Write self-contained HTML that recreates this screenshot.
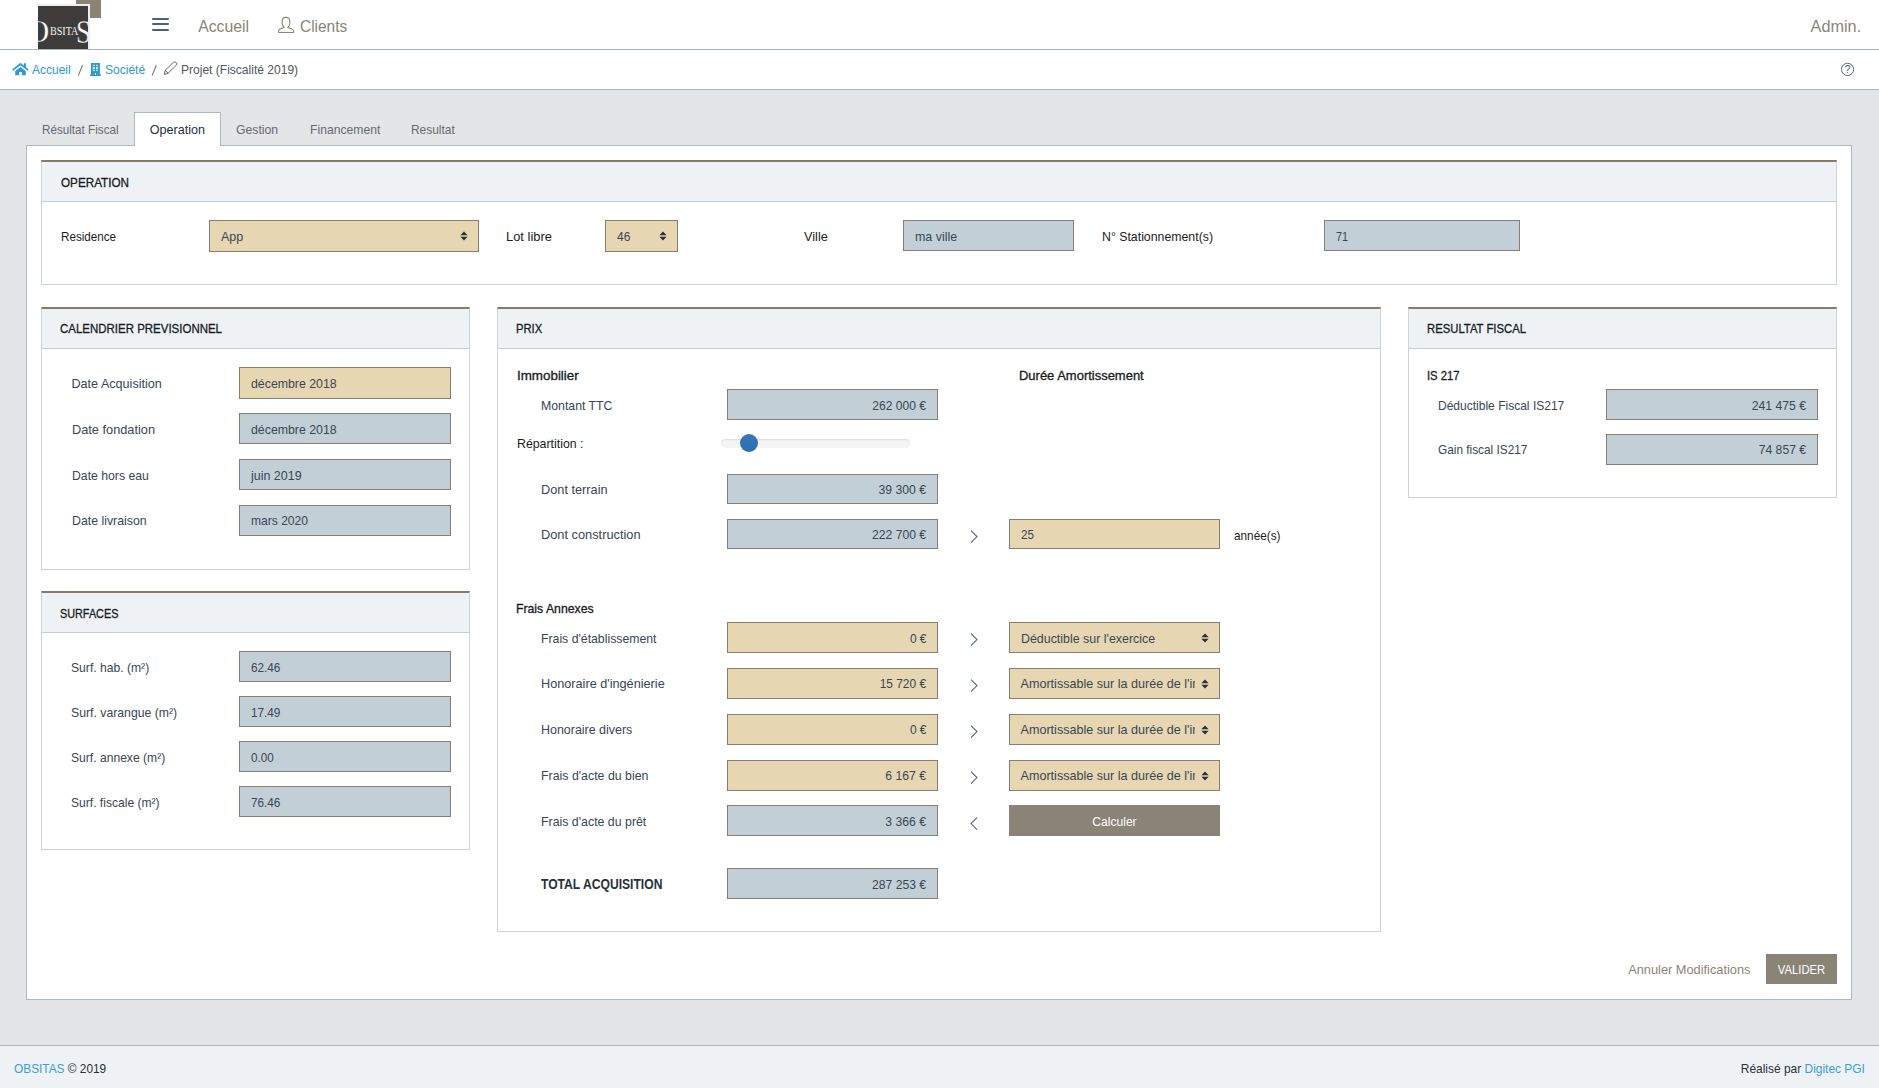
<!DOCTYPE html>
<html><head><meta charset="utf-8"><title>Projet (Fiscalité 2019)</title>
<style>
html,body{margin:0;padding:0;}
body{width:1879px;height:1088px;position:relative;overflow:hidden;background:#e4e5e7;font-family:"Liberation Sans",sans-serif;}
.a{position:absolute;white-space:nowrap;}
</style></head><body>
<div class="a" style="left:0px;top:0px;width:1879px;height:50px;background:#fff;border-bottom:1px solid #a3b4be;box-sizing:border-box;"></div>
<div class="a" style="left:76px;top:0px;width:25px;height:18px;background:#8a8476;"></div>
<div class="a" style="left:38px;top:4px;width:52px;height:45px;background:#eceef0;"></div>
<div class="a" style="left:38px;top:6px;width:50px;height:43px;background:#3d3c3b;"></div>
<div class="a" style="left:38px;top:5px;width:50px;height:44px;overflow:hidden"><div class="a" style="left:-12px;top:10px;font-family:'Liberation Serif',serif;font-size:32.5px;line-height:32.5px;color:#fff;-webkit-text-stroke:0.4px #3d3c3b">O</div><div class="a" style="left:11.5px;top:19px;font-family:'Liberation Serif',serif;font-size:13.3px;line-height:13.3px;color:#f4f4f4;transform:scaleX(0.76);transform-origin:0 0">BSITA</div><div class="a" style="left:38px;top:9px;font-family:'Liberation Serif',serif;font-size:34.4px;line-height:34.4px;color:#fff;-webkit-text-stroke:0.4px #3d3c3b;transform:scaleX(0.78);transform-origin:0 0">S</div></div>
<div class="a" style="left:152.2px;top:17.95px;width:16.80000000000001px;height:1.7000000000000028px;background:#4d6271;border-radius:1px;"></div>
<div class="a" style="left:152.2px;top:23.349999999999998px;width:16.80000000000001px;height:1.7000000000000028px;background:#4d6271;border-radius:1px;"></div>
<div class="a" style="left:152.2px;top:28.95px;width:16.80000000000001px;height:1.7000000000000028px;background:#4d6271;border-radius:1px;"></div>
<div class="a" style="top:18.00px;font-size:15.8px;line-height:18.17px;color:#8a8577;left:198.2px;">Accueil</div>
<svg class="a" style="left:277px;top:16px" width="18" height="18" viewBox="0 0 18 18"><path d="M9 1.4 C6.6 1.4 5.2 2.9 5.2 5.2 L5.2 7.8 C5.2 9.2 6 10.3 7 11 L7.2 11.5 C5.2 12.1 3.6 12.6 2.4 13.3 C1.8 13.7 1.6 14.3 1.6 15 L1.6 16.5 L16.6 16.5 L16.6 15 C16.6 14.3 16.2 13.8 15.6 13.4 C14.4 12.6 12.8 12.1 10.8 11.5 L11 11 C12 10.3 12.8 9.2 12.8 7.8 L12.8 5.2 C12.8 2.9 11.4 1.4 9 1.4 Z" fill="none" stroke="#8a8577" stroke-width="1.1" stroke-linejoin="round"/></svg>
<div class="a" style="top:18.00px;font-size:15.8px;line-height:18.17px;color:#8a8577;left:299.8px;transform:scaleX(0.9773);transform-origin:0 0;">Clients</div>
<div class="a" style="top:18.00px;font-size:15.8px;line-height:18.17px;color:#8a8577;right:17.40000000000009px;transform:scaleX(1.0290);transform-origin:100% 0;">Admin.</div>
<div class="a" style="left:0px;top:50px;width:1879px;height:40px;background:#fff;border-bottom:1px solid #a3b4be;box-sizing:border-box;"></div>
<svg class="a" style="left:10px;top:60px" width="22" height="18" viewBox="0 0 22 18"><polyline points="3.3,9.6 10.4,4.0 17.6,9.6" fill="none" stroke="#2b9ad4" stroke-width="1.8" stroke-linecap="round" stroke-linejoin="round"/><rect x="13.9" y="3.3" width="2" height="4" fill="#2b9ad4"/><path d="M5.2 10.9 L10.4 6.9 L15.8 10.9 V15.3 H11.9 V12 H9 V15.3 H5.2 Z" fill="#2b9ad4"/></svg>
<div class="a" style="top:63.00px;font-size:12.6px;line-height:14.49px;color:#2b9ad4;left:31.5px;transform:scaleX(0.9530);transform-origin:0 0;">Accueil</div>
<svg class="a" style="left:76px;top:63px" width="9" height="15" viewBox="0 0 9 15"><line x1="6.5" y1="2.3" x2="2.3" y2="12.6" stroke="#6a7178" stroke-width="1.05"/></svg>
<svg class="a" style="left:86px;top:60px" width="18" height="18" viewBox="0 0 18 18"><path d="M5 3.1 H13.9 V14.5 H14.9 V15.9 H4 V14.5 H5 Z" fill="#2b9ad4"/><g fill="#dff0f8"><rect x="6.9" y="4.8" width="1.9" height="1.1"/><rect x="10" y="4.8" width="1.9" height="1.1"/><rect x="6.9" y="6.9" width="1.9" height="2.3"/><rect x="10" y="6.9" width="1.9" height="2.3"/><rect x="6.9" y="9.9" width="1.9" height="1.1"/><rect x="10" y="9.9" width="1.9" height="1.1"/></g><ellipse cx="9.45" cy="13.9" rx="0.6" ry="1.0" fill="#fff"/></svg>
<div class="a" style="top:63.00px;font-size:12.6px;line-height:14.49px;color:#2b9ad4;left:104.7px;transform:scaleX(0.9544);transform-origin:0 0;">Société</div>
<svg class="a" style="left:150px;top:63px" width="9" height="15" viewBox="0 0 9 15"><line x1="6.3" y1="2.3" x2="2.1" y2="12.6" stroke="#6a7178" stroke-width="1.05"/></svg>
<svg class="a" style="left:160px;top:60px" width="20" height="18" viewBox="0 0 20 18"><path d="M4.4 14.5 L5.1 10.4 L13.4 2.3 Q15.3 1.2 16.6 2.9 Q17.4 4.3 16.5 5 L8.2 13.1 Z M5.1 10.4 L8.2 13.1" fill="none" stroke="#5d6166" stroke-width="0.95" stroke-linejoin="round"/></svg>
<div class="a" style="top:63.00px;font-size:12.6px;line-height:14.49px;color:#50575e;left:180.9px;transform:scaleX(0.9559);transform-origin:0 0;">Projet (Fiscalité 2019)</div>
<svg class="a" style="left:1840px;top:62px" width="15" height="15" viewBox="0 0 15 15"><circle cx="7.6" cy="7.4" r="6.1" fill="none" stroke="#44505c" stroke-width="0.85"/><text x="7.6" y="10.7" text-anchor="middle" font-family="Liberation Sans" font-size="10" fill="#44505c">?</text></svg>
<div class="a" style="left:134px;top:112px;width:87px;height:34px;background:#fff;border:1px solid #a9bac4;border-bottom:none;box-sizing:border-box;"></div>
<div class="a" style="top:123.00px;font-size:12.6px;line-height:14.49px;color:#646b72;left:41.7px;transform:scaleX(0.9274);transform-origin:0 0;">Résultat Fiscal</div>
<div class="a" style="top:123.00px;font-size:12.6px;line-height:14.49px;color:#27303a;left:149.7px;">Operation</div>
<div class="a" style="top:123.00px;font-size:12.6px;line-height:14.49px;color:#646b72;left:236.2px;transform:scaleX(0.9699);transform-origin:0 0;">Gestion</div>
<div class="a" style="top:123.00px;font-size:12.6px;line-height:14.49px;color:#646b72;left:309.6px;transform:scaleX(0.9655);transform-origin:0 0;">Financement</div>
<div class="a" style="top:123.00px;font-size:12.6px;line-height:14.49px;color:#646b72;left:411.2px;transform:scaleX(0.9480);transform-origin:0 0;">Resultat</div>
<div class="a" style="left:26px;top:145px;width:1826px;height:855px;background:#fff;border:1px solid #a9bac4;box-sizing:border-box;"></div>
<div class="a" style="left:135px;top:145px;width:85px;height:2px;background:#fff;"></div>
<div class="a" style="left:41px;top:160px;width:1796px;height:125px;background:#fff;border:1px solid #c9d4db;border-top:2px solid #857b6a;box-sizing:border-box;"></div>
<div class="a" style="left:42px;top:162px;width:1794px;height:40px;background:#eef2f5;border-bottom:1px solid #c3cfd8;box-sizing:border-box;"></div>
<div class="a" style="top:176.00px;font-size:12.6px;line-height:14.49px;color:#161c22;left:60.5px;transform:scaleX(0.9283);transform-origin:0 0;-webkit-text-stroke:0.3px #161c22;">OPERATION</div>
<div class="a" style="top:230.00px;font-size:12.6px;line-height:14.49px;color:#1b1d20;left:60.9px;transform:scaleX(0.9241);transform-origin:0 0;">Residence</div>
<div class="a" style="left:209px;top:220px;width:270px;height:32px;background:#e6d6b2;border:1px solid #877e6f;box-sizing:border-box;"></div>
<div class="a" style="top:230.00px;font-size:12.6px;line-height:14.49px;color:#3a4653;left:220.8px;transform:scaleX(0.9901);transform-origin:0 0;">App</div>
<svg class="a" style="left:459.5px;top:231.0px" width="8" height="10" viewBox="0 0 8 10"><path d="M0.4 4.3 L4 0.6 L7.6 4.3 Z M0.4 5.7 L4 9.4 L7.6 5.7 Z" fill="#26313b"/></svg>
<div class="a" style="top:230.00px;font-size:12.6px;line-height:14.49px;color:#1b1d20;left:506.2px;transform:scaleX(1.0243);transform-origin:0 0;">Lot libre</div>
<div class="a" style="left:605px;top:220px;width:73px;height:32px;background:#e6d6b2;border:1px solid #877e6f;box-sizing:border-box;"></div>
<div class="a" style="top:230.00px;font-size:12.6px;line-height:14.49px;color:#3a4653;left:616.8px;transform:scaleX(0.9561);transform-origin:0 0;">46</div>
<svg class="a" style="left:658.5px;top:231.0px" width="8" height="10" viewBox="0 0 8 10"><path d="M0.4 4.3 L4 0.6 L7.6 4.3 Z M0.4 5.7 L4 9.4 L7.6 5.7 Z" fill="#26313b"/></svg>
<div class="a" style="top:230.00px;font-size:12.6px;line-height:14.49px;color:#1b1d20;left:803.6px;transform:scaleX(1.0094);transform-origin:0 0;">Ville</div>
<div class="a" style="left:903px;top:220px;width:171px;height:31px;background:#c3cfd7;border:1px solid #877e6f;box-sizing:border-box;"></div>
<div class="a" style="top:230.00px;font-size:12.6px;line-height:14.49px;color:#3a4653;left:914.8px;transform:scaleX(0.9882);transform-origin:0 0;">ma ville</div>
<div class="a" style="top:230.00px;font-size:12.6px;line-height:14.49px;color:#1b1d20;left:1101.7px;transform:scaleX(0.9777);transform-origin:0 0;">N° Stationnement(s)</div>
<div class="a" style="left:1324px;top:220px;width:196px;height:31px;background:#c3cfd7;border:1px solid #877e6f;box-sizing:border-box;"></div>
<div class="a" style="top:230.00px;font-size:12.6px;line-height:14.49px;color:#3a4653;left:1335.8px;transform:scaleX(0.8562);transform-origin:0 0;">71</div>
<div class="a" style="left:41px;top:307px;width:429px;height:263px;background:#fff;border:1px solid #c9d4db;border-top:2px solid #857b6a;box-sizing:border-box;"></div>
<div class="a" style="left:42px;top:309px;width:427px;height:40px;background:#eef2f5;border-bottom:1px solid #c3cfd8;box-sizing:border-box;"></div>
<div class="a" style="top:322.00px;font-size:12.6px;line-height:14.49px;color:#161c22;left:60.4px;transform:scaleX(0.9113);transform-origin:0 0;-webkit-text-stroke:0.3px #161c22;">CALENDRIER PREVISIONNEL</div>
<div class="a" style="top:377.00px;font-size:12.6px;line-height:14.49px;color:#384653;left:71.5px;">Date Acquisition</div>
<div class="a" style="left:239px;top:367px;width:212px;height:32px;background:#e6d6b2;border:1px solid #877e6f;box-sizing:border-box;"></div>
<div class="a" style="top:377.00px;font-size:12.6px;line-height:14.49px;color:#3a4653;left:250.8px;transform:scaleX(0.9791);transform-origin:0 0;">décembre 2018</div>
<div class="a" style="top:423.00px;font-size:12.6px;line-height:14.49px;color:#384653;left:71.5px;transform:scaleX(1.0132);transform-origin:0 0;">Date fondation</div>
<div class="a" style="left:239px;top:413px;width:212px;height:31px;background:#c3cfd7;border:1px solid #877e6f;box-sizing:border-box;"></div>
<div class="a" style="top:423.00px;font-size:12.6px;line-height:14.49px;color:#3a4653;left:250.8px;transform:scaleX(0.9791);transform-origin:0 0;">décembre 2018</div>
<div class="a" style="top:469.00px;font-size:12.6px;line-height:14.49px;color:#384653;left:71.5px;transform:scaleX(0.9706);transform-origin:0 0;">Date hors eau</div>
<div class="a" style="left:239px;top:459px;width:212px;height:31px;background:#c3cfd7;border:1px solid #877e6f;box-sizing:border-box;"></div>
<div class="a" style="top:469.00px;font-size:12.6px;line-height:14.49px;color:#3a4653;left:250.8px;transform:scaleX(0.9897);transform-origin:0 0;">juin 2019</div>
<div class="a" style="top:514.00px;font-size:12.6px;line-height:14.49px;color:#384653;left:71.5px;transform:scaleX(0.9791);transform-origin:0 0;">Date livraison</div>
<div class="a" style="left:239px;top:505px;width:212px;height:31px;background:#c3cfd7;border:1px solid #877e6f;box-sizing:border-box;"></div>
<div class="a" style="top:514.00px;font-size:12.6px;line-height:14.49px;color:#3a4653;left:250.8px;transform:scaleX(0.9577);transform-origin:0 0;">mars 2020</div>
<div class="a" style="left:41px;top:591px;width:429px;height:259px;background:#fff;border:1px solid #c9d4db;border-top:2px solid #857b6a;box-sizing:border-box;"></div>
<div class="a" style="left:42px;top:593px;width:427px;height:40px;background:#eef2f5;border-bottom:1px solid #c3cfd8;box-sizing:border-box;"></div>
<div class="a" style="top:607.00px;font-size:12.6px;line-height:14.49px;color:#161c22;left:60.4px;transform:scaleX(0.8602);transform-origin:0 0;-webkit-text-stroke:0.3px #161c22;">SURFACES</div>
<div class="a" style="top:661.00px;font-size:12.6px;line-height:14.49px;color:#384653;left:71.2px;transform:scaleX(0.9632);transform-origin:0 0;">Surf. hab. (m²)</div>
<div class="a" style="left:239px;top:651px;width:212px;height:31px;background:#c3cfd7;border:1px solid #877e6f;box-sizing:border-box;"></div>
<div class="a" style="top:661.00px;font-size:12.6px;line-height:14.49px;color:#3a4653;left:250.8px;transform:scaleX(0.9329);transform-origin:0 0;">62.46</div>
<div class="a" style="top:706.00px;font-size:12.6px;line-height:14.49px;color:#384653;left:71.2px;transform:scaleX(0.9726);transform-origin:0 0;">Surf. varangue (m²)</div>
<div class="a" style="left:239px;top:696px;width:212px;height:31px;background:#c3cfd7;border:1px solid #877e6f;box-sizing:border-box;"></div>
<div class="a" style="top:706.00px;font-size:12.6px;line-height:14.49px;color:#3a4653;left:250.8px;transform:scaleX(0.9329);transform-origin:0 0;">17.49</div>
<div class="a" style="top:751.00px;font-size:12.6px;line-height:14.49px;color:#384653;left:71.2px;transform:scaleX(0.9614);transform-origin:0 0;">Surf. annexe (m²)</div>
<div class="a" style="left:239px;top:741px;width:212px;height:31px;background:#c3cfd7;border:1px solid #877e6f;box-sizing:border-box;"></div>
<div class="a" style="top:751.00px;font-size:12.6px;line-height:14.49px;color:#3a4653;left:250.8px;transform:scaleX(0.9259);transform-origin:0 0;">0.00</div>
<div class="a" style="top:796.00px;font-size:12.6px;line-height:14.49px;color:#384653;left:71.2px;transform:scaleX(0.9591);transform-origin:0 0;">Surf. fiscale (m²)</div>
<div class="a" style="left:239px;top:786px;width:212px;height:31px;background:#c3cfd7;border:1px solid #877e6f;box-sizing:border-box;"></div>
<div class="a" style="top:796.00px;font-size:12.6px;line-height:14.49px;color:#3a4653;left:250.8px;transform:scaleX(0.9329);transform-origin:0 0;">76.46</div>
<div class="a" style="left:497px;top:307px;width:884px;height:625px;background:#fff;border:1px solid #c9d4db;border-top:2px solid #857b6a;box-sizing:border-box;"></div>
<div class="a" style="left:498px;top:309px;width:882px;height:40px;background:#eef2f5;border-bottom:1px solid #c3cfd8;box-sizing:border-box;"></div>
<div class="a" style="top:322.00px;font-size:12.6px;line-height:14.49px;color:#161c22;left:516.3px;transform:scaleX(0.8910);transform-origin:0 0;-webkit-text-stroke:0.3px #161c22;">PRIX</div>
<div class="a" style="top:369.00px;font-size:12.6px;line-height:14.49px;color:#161c22;left:516.5px;transform:scaleX(1.0621);transform-origin:0 0;-webkit-text-stroke:0.3px #161c22;">Immobilier</div>
<div class="a" style="top:369.00px;font-size:12.6px;line-height:14.49px;color:#161c22;left:1019px;transform:scaleX(1.0298);transform-origin:0 0;-webkit-text-stroke:0.3px #161c22;">Durée Amortissement</div>
<div class="a" style="top:399.00px;font-size:12.6px;line-height:14.49px;color:#384653;left:540.8px;transform:scaleX(0.9759);transform-origin:0 0;">Montant TTC</div>
<div class="a" style="left:727px;top:389px;width:211px;height:31px;background:#c3cfd7;border:1px solid #877e6f;box-sizing:border-box;"></div>
<div class="a" style="top:399.00px;font-size:12.6px;line-height:14.49px;color:#3a4653;right:952.5px;transform:scaleX(0.9602);transform-origin:100% 0;">262 000 €</div>
<div class="a" style="top:437.00px;font-size:12.6px;line-height:14.49px;color:#1b1d20;left:516.5px;transform:scaleX(0.9793);transform-origin:0 0;">Répartition :</div>
<div class="a" style="left:721px;top:439px;width:189px;height:9px;background:#f5f5f5;border-radius:4.5px;box-shadow:inset 0 1px 1.5px rgba(0,0,0,0.10);"></div>
<div class="a" style="left:739.8px;top:433.8px;width:18.0px;height:18.0px;background:#3074b4;border-radius:50%;background-image:linear-gradient(#3379b9,#2d6eae);"></div>
<div class="a" style="top:483.00px;font-size:12.6px;line-height:14.49px;color:#384653;left:540.6px;transform:scaleX(1.0120);transform-origin:0 0;">Dont terrain</div>
<div class="a" style="left:727px;top:474px;width:211px;height:30px;background:#c3cfd7;border:1px solid #877e6f;box-sizing:border-box;"></div>
<div class="a" style="top:483.00px;font-size:12.6px;line-height:14.49px;color:#3a4653;right:952.5px;transform:scaleX(0.9688);transform-origin:100% 0;">39 300 €</div>
<div class="a" style="top:528.00px;font-size:12.6px;line-height:14.49px;color:#384653;left:540.6px;transform:scaleX(1.0162);transform-origin:0 0;">Dont construction</div>
<div class="a" style="left:727px;top:519px;width:211px;height:30px;background:#c3cfd7;border:1px solid #877e6f;box-sizing:border-box;"></div>
<div class="a" style="top:528.00px;font-size:12.6px;line-height:14.49px;color:#3a4653;right:952.5px;transform:scaleX(0.9637);transform-origin:100% 0;">222 700 €</div>
<svg class="a" style="left:969.5px;top:529.9px" width="8" height="13.2" viewBox="0 0 8 13.2"><path d="M1 0.6 L7 6.6 L1 12.6" fill="none" stroke="#4a6282" stroke-width="1.05"/></svg>
<div class="a" style="left:1009px;top:519px;width:211px;height:30px;background:#e6d6b2;border:1px solid #877e6f;box-sizing:border-box;"></div>
<div class="a" style="top:528.00px;font-size:12.6px;line-height:14.49px;color:#3a4653;left:1020.8px;transform:scaleX(0.9275);transform-origin:0 0;">25</div>
<div class="a" style="top:529.00px;font-size:12.6px;line-height:14.49px;color:#1b1d20;left:1233.8px;transform:scaleX(0.9353);transform-origin:0 0;">année(s)</div>
<div class="a" style="top:602.00px;font-size:12.6px;line-height:14.49px;color:#161c22;left:516px;transform:scaleX(0.9723);transform-origin:0 0;-webkit-text-stroke:0.3px #161c22;">Frais Annexes</div>
<div class="a" style="top:632.00px;font-size:12.6px;line-height:14.49px;color:#384653;left:540.6px;transform:scaleX(0.9738);transform-origin:0 0;">Frais d'établissement</div>
<div class="a" style="left:727px;top:622px;width:211px;height:31px;background:#e6d6b2;border:1px solid #877e6f;box-sizing:border-box;"></div>
<div class="a" style="top:632.00px;font-size:12.6px;line-height:14.49px;color:#3a4653;right:952.5px;transform:scaleX(0.9477);transform-origin:100% 0;">0 €</div>
<svg class="a" style="left:969.5px;top:632.6999999999999px" width="8" height="13.2" viewBox="0 0 8 13.2"><path d="M1 0.6 L7 6.6 L1 12.6" fill="none" stroke="#4a6282" stroke-width="1.05"/></svg>
<div class="a" style="left:1009px;top:622px;width:211px;height:31px;background:#e6d6b2;border:1px solid #877e6f;box-sizing:border-box;"></div>
<div class="a" style="left:1010px;top:623px;width:185px;height:29px;overflow:hidden"><div class="a" style="top:9.00px;font-size:12.6px;line-height:14.49px;color:#3a4653;left:10.5px;transform:scaleX(0.9852);transform-origin:0 0;">Déductible sur l'exercice</div>
</div>
<svg class="a" style="left:1200.5px;top:632.5px" width="8" height="10" viewBox="0 0 8 10"><path d="M0.4 4.3 L4 0.6 L7.6 4.3 Z M0.4 5.7 L4 9.4 L7.6 5.7 Z" fill="#26313b"/></svg>
<div class="a" style="top:677.00px;font-size:12.6px;line-height:14.49px;color:#384653;left:540.6px;transform:scaleX(1.0071);transform-origin:0 0;">Honoraire d'ingénierie</div>
<div class="a" style="left:727px;top:668px;width:211px;height:31px;background:#e6d6b2;border:1px solid #877e6f;box-sizing:border-box;"></div>
<div class="a" style="top:677.00px;font-size:12.6px;line-height:14.49px;color:#3a4653;right:952.5px;transform:scaleX(0.9463);transform-origin:100% 0;">15 720 €</div>
<svg class="a" style="left:969.5px;top:678.6999999999999px" width="8" height="13.2" viewBox="0 0 8 13.2"><path d="M1 0.6 L7 6.6 L1 12.6" fill="none" stroke="#4a6282" stroke-width="1.05"/></svg>
<div class="a" style="left:1009px;top:668px;width:211px;height:31px;background:#e6d6b2;border:1px solid #877e6f;box-sizing:border-box;"></div>
<div class="a" style="left:1010px;top:669px;width:185px;height:29px;overflow:hidden"><div class="a" style="top:8.00px;font-size:12.6px;line-height:14.49px;color:#3a4653;left:10.5px;">Amortissable sur la durée de l'immobilisation</div>
</div>
<svg class="a" style="left:1200.5px;top:678.5px" width="8" height="10" viewBox="0 0 8 10"><path d="M0.4 4.3 L4 0.6 L7.6 4.3 Z M0.4 5.7 L4 9.4 L7.6 5.7 Z" fill="#26313b"/></svg>
<div class="a" style="top:723.00px;font-size:12.6px;line-height:14.49px;color:#384653;left:540.6px;transform:scaleX(0.9880);transform-origin:0 0;">Honoraire divers</div>
<div class="a" style="left:727px;top:714px;width:211px;height:31px;background:#e6d6b2;border:1px solid #877e6f;box-sizing:border-box;"></div>
<div class="a" style="top:723.00px;font-size:12.6px;line-height:14.49px;color:#3a4653;right:952.5px;transform:scaleX(0.9477);transform-origin:100% 0;">0 €</div>
<svg class="a" style="left:969.5px;top:724.6999999999999px" width="8" height="13.2" viewBox="0 0 8 13.2"><path d="M1 0.6 L7 6.6 L1 12.6" fill="none" stroke="#4a6282" stroke-width="1.05"/></svg>
<div class="a" style="left:1009px;top:714px;width:211px;height:31px;background:#e6d6b2;border:1px solid #877e6f;box-sizing:border-box;"></div>
<div class="a" style="left:1010px;top:715px;width:185px;height:29px;overflow:hidden"><div class="a" style="top:8.00px;font-size:12.6px;line-height:14.49px;color:#3a4653;left:10.5px;">Amortissable sur la durée de l'immobilisation</div>
</div>
<svg class="a" style="left:1200.5px;top:724.5px" width="8" height="10" viewBox="0 0 8 10"><path d="M0.4 4.3 L4 0.6 L7.6 4.3 Z M0.4 5.7 L4 9.4 L7.6 5.7 Z" fill="#26313b"/></svg>
<div class="a" style="top:769.00px;font-size:12.6px;line-height:14.49px;color:#384653;left:540.6px;transform:scaleX(0.9807);transform-origin:0 0;">Frais d'acte du bien</div>
<div class="a" style="left:727px;top:760px;width:211px;height:31px;background:#e6d6b2;border:1px solid #877e6f;box-sizing:border-box;"></div>
<div class="a" style="top:769.00px;font-size:12.6px;line-height:14.49px;color:#3a4653;right:952.5px;transform:scaleX(0.9683);transform-origin:100% 0;">6 167 €</div>
<svg class="a" style="left:969.5px;top:770.6999999999999px" width="8" height="13.2" viewBox="0 0 8 13.2"><path d="M1 0.6 L7 6.6 L1 12.6" fill="none" stroke="#4a6282" stroke-width="1.05"/></svg>
<div class="a" style="left:1009px;top:760px;width:211px;height:31px;background:#e6d6b2;border:1px solid #877e6f;box-sizing:border-box;"></div>
<div class="a" style="left:1010px;top:761px;width:185px;height:29px;overflow:hidden"><div class="a" style="top:8.00px;font-size:12.6px;line-height:14.49px;color:#3a4653;left:10.5px;">Amortissable sur la durée de l'immobilisation</div>
</div>
<svg class="a" style="left:1200.5px;top:770.5px" width="8" height="10" viewBox="0 0 8 10"><path d="M0.4 4.3 L4 0.6 L7.6 4.3 Z M0.4 5.7 L4 9.4 L7.6 5.7 Z" fill="#26313b"/></svg>
<div class="a" style="top:815.00px;font-size:12.6px;line-height:14.49px;color:#384653;left:540.6px;transform:scaleX(0.9804);transform-origin:0 0;">Frais d'acte du prêt</div>
<div class="a" style="left:727px;top:805px;width:211px;height:31px;background:#c3cfd7;border:1px solid #877e6f;box-sizing:border-box;"></div>
<div class="a" style="top:815.00px;font-size:12.6px;line-height:14.49px;color:#3a4653;right:952.5px;transform:scaleX(0.9683);transform-origin:100% 0;">3 366 €</div>
<svg class="a" style="left:969.5px;top:816.8px" width="8" height="13.2" viewBox="0 0 8 13.2"><path d="M7 0.6 L1 6.6 L7 12.6" fill="none" stroke="#4a6282" stroke-width="1.05"/></svg>
<div class="a" style="left:1009px;top:805px;width:211px;height:31px;background:#8a8476;"></div>
<div class="a" style="top:815.00px;font-size:12.6px;line-height:14.49px;color:#fff;left:1009.0px;width:211px;text-align:center;transform:scaleX(0.9588);transform-origin:50% 0;">Calculer</div>
<div class="a" style="top:876.00px;font-size:14px;line-height:16.1px;color:#27313a;font-weight:700;left:540.5px;transform:scaleX(0.8655);transform-origin:0 0;">TOTAL ACQUISITION</div>
<div class="a" style="left:727px;top:868px;width:211px;height:31px;background:#c3cfd7;border:1px solid #877e6f;box-sizing:border-box;"></div>
<div class="a" style="top:878.00px;font-size:12.6px;line-height:14.49px;color:#3a4653;right:952.5px;transform:scaleX(0.9637);transform-origin:100% 0;">287 253 €</div>
<div class="a" style="left:1408px;top:307px;width:429px;height:191px;background:#fff;border:1px solid #c9d4db;border-top:2px solid #857b6a;box-sizing:border-box;"></div>
<div class="a" style="left:1409px;top:309px;width:427px;height:40px;background:#eef2f5;border-bottom:1px solid #c3cfd8;box-sizing:border-box;"></div>
<div class="a" style="top:322.00px;font-size:12.6px;line-height:14.49px;color:#161c22;left:1427px;transform:scaleX(0.8972);transform-origin:0 0;-webkit-text-stroke:0.3px #161c22;">RESULTAT FISCAL</div>
<div class="a" style="top:369.00px;font-size:12.6px;line-height:14.49px;color:#161c22;left:1427px;transform:scaleX(0.8923);transform-origin:0 0;-webkit-text-stroke:0.3px #161c22;">IS 217</div>
<div class="a" style="top:399.00px;font-size:12.6px;line-height:14.49px;color:#384653;left:1438.4px;transform:scaleX(0.9546);transform-origin:0 0;">Déductible Fiscal IS217</div>
<div class="a" style="left:1606px;top:389px;width:212px;height:31px;background:#c3cfd7;border:1px solid #877e6f;box-sizing:border-box;"></div>
<div class="a" style="top:399.00px;font-size:12.6px;line-height:14.49px;color:#3a4653;right:72.5px;transform:scaleX(0.9709);transform-origin:100% 0;">241 475 €</div>
<div class="a" style="top:443.00px;font-size:12.6px;line-height:14.49px;color:#384653;left:1438.4px;transform:scaleX(0.9389);transform-origin:0 0;">Gain fiscal IS217</div>
<div class="a" style="left:1606px;top:434px;width:212px;height:31px;background:#c3cfd7;border:1px solid #877e6f;box-sizing:border-box;"></div>
<div class="a" style="top:443.00px;font-size:12.6px;line-height:14.49px;color:#3a4653;right:72.5px;transform:scaleX(0.9647);transform-origin:100% 0;">74 857 €</div>
<div class="a" style="top:963.00px;font-size:12.6px;line-height:14.49px;color:#8a8577;right:128.20000000000005px;transform:scaleX(1.0149);transform-origin:100% 0;">Annuler Modifications</div>
<div class="a" style="left:1766px;top:954px;width:71px;height:30px;background:#8a8476;"></div>
<div class="a" style="top:963.00px;font-size:12.6px;line-height:14.49px;color:#fff;left:1766.0px;width:71px;text-align:center;transform:scaleX(0.8949);transform-origin:50% 0;">VALIDER</div>
<div class="a" style="left:0px;top:1045px;width:1879px;height:43px;background:#eef2f5;border-top:1px solid #a9bac4;box-sizing:border-box;"></div>
<div class="a" style="top:1062.00px;font-size:12.6px;line-height:14.49px;color:#2a2f35;left:13.8px;transform:scaleX(0.9413);transform-origin:0 0;"><span style="color:#3aa0d8">OBSITAS</span> © 2019</div>
<div class="a" style="top:1062.00px;font-size:12.6px;line-height:14.49px;color:#2a2f35;right:14.599999999999909px;transform:scaleX(0.9480);transform-origin:100% 0;">Réalisé par <span style="color:#3aa0d8">Digitec PGI</span></div>
</body></html>
